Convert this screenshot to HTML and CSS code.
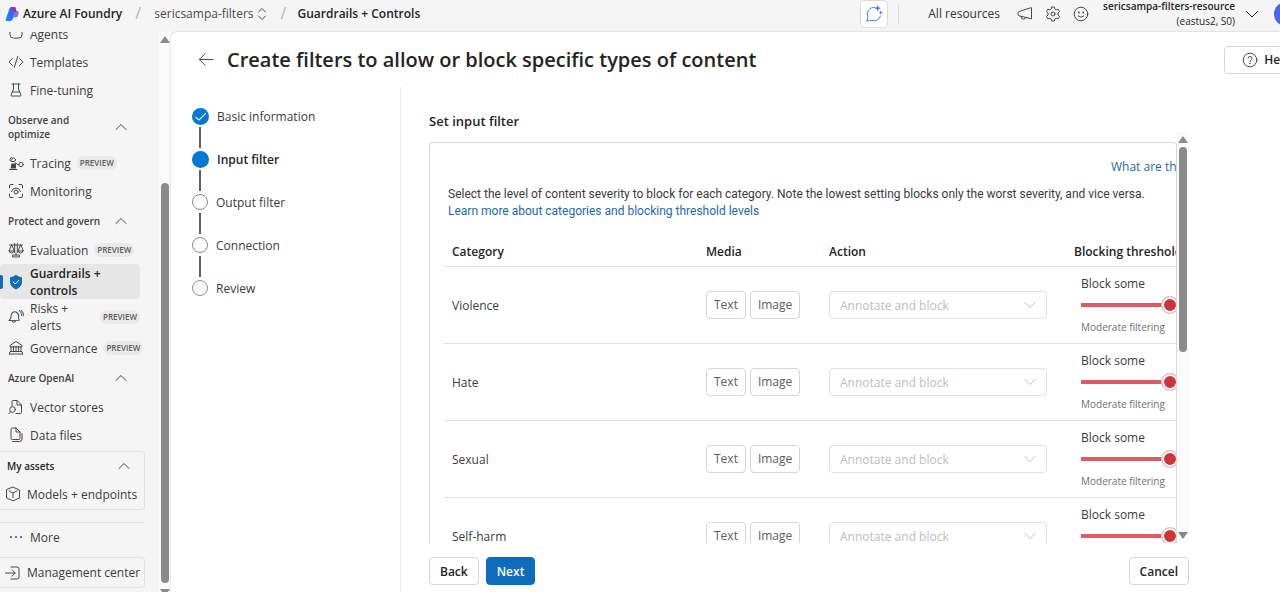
FILE: index.html
```html
<!DOCTYPE html>
<html lang="en">
<head>
<meta charset="utf-8">
<title>Azure AI Foundry - Guardrails + Controls</title>
<link rel="stylesheet" href="styles.css">
</head>
<body>
<header class="topbar">
  <a class="brand" href="#">
    <svg class="logo" viewBox="0 0 14 16" aria-hidden="true">
      <defs><linearGradient id="lg" x1="0" y1="1" x2="1" y2="0"><stop offset="0" stop-color="#1b8cf0"/><stop offset="1" stop-color="#3a55f5"/></linearGradient></defs>
      <path d="M6 1h4.500L9.500 5.500 8 12.500Q7.300 15 5 15H1.500Q.2 15 .7 13.600L4.500 2.500Q5 1 6 1z" fill="url(#lg)"/>
      <path d="M9.300 5H12q2 0 1.700 2L13 9.500Q12.500 11.500 10.500 11.500H8z" fill="#7d74f2"/>
      <path d="M6.500 1H9q1.500 0 1.900 1.500L11.600 6H9.500Q8.500 6 8.200 5L7.400 2Q7.200 1 6.500 1z" fill="#c0208f"/>
    </svg>
    Azure AI Foundry</a>
  <span class="slash">/</span>
  <button class="project" type="button">sericsampa-filters
    <svg class="i16" viewBox="0 0 16 16" aria-hidden="true"><path d="M4.500 6 8 2.500 11.500 6M4.500 10 8 13.500 11.500 10"/></svg>
  </button>
  <span class="slash near">/</span>
  <span class="crumb">Guardrails + Controls</span>
  <div class="tools">
    <button class="copilot" type="button" aria-label="Open assistant">
      <svg class="i18" viewBox="0 0 18 18" aria-hidden="true"><path d="M10 2.500A6.700 6.700 0 0 0 3 12.200L1.800 16.200l4.200-1A6.700 6.700 0 0 0 15.500 11"/><path class="spark" d="M12.700 0l.9 2.300 2.300.9-2.300.9-.9 2.300-.9-2.300-2.300-.9 2.300-.9zM15.800 5.500l.6 1.500 1.500.6-1.500.6-.6 1.500-.6-1.500-1.500-.6 1.500-.6z"/></svg>
    </button>
    <span class="bar"></span>
    <a class="all" href="#">All resources</a>
    <div class="icons">
      <button type="button" aria-label="Announcements"><svg class="i16" viewBox="0 0 16 16"><path d="M14.500 2.200v10.600L2 9.800q-1-.3-1-1.200V7q0-1 1-1.400L13.500 1.800q1-.3 1 .4zM4 10.300q0 2.900 2.500 2.900 2 0 2.500-1.800"/></svg></button>
      <button type="button" aria-label="Settings"><svg class="i16" viewBox="0 0 16 16"><path d="M6.700 1h2.600l.5 2 1.400.8 2-.6 1.300 2.300L13 7v2l1.500 1.500-1.300 2.300-2-.6-1.400.8-.5 2H6.700l-.5-2-1.400-.8-2 .6-1.300-2.300L3 9V7L1.500 5.500l1.300-2.300 2 .6L6.200 3z"/><circle cx="8" cy="8" r="2"/></svg></button>
      <button type="button" aria-label="Feedback"><svg class="i16" viewBox="0 0 16 16"><circle cx="8" cy="8" r="6.800"/><path d="M5.300 10q2.700 2.700 5.400 0"/><circle class="dot" cx="5.800" cy="6.500" r=".9"/><circle class="dot" cx="10.200" cy="6.500" r=".9"/></svg></button>
    </div>
    <button class="account" type="button">
      <span class="who"><b>sericsampa-filters-resource</b><span>(eastus2, S0)</span></span>
      <svg class="i14 dark" viewBox="0 0 14 14" aria-hidden="true"><path d="M1.500 4.500 7 10l5.500-5.500"/></svg>
    </button>
    <span class="avatar"></span>
  </div>
</header>

<div class="shell">
  <aside class="side">
    <nav class="nav">
      <a class="item" href="#"><svg class="i16" viewBox="0 0 16 16"><path d="M2 6v3q0 3 3 3M14 6v3q0 3-3 3H8q-1 1-2 0"/></svg>Agents</a>
      <a class="item" href="#"><svg class="i16" viewBox="0 0 16 16"><path d="M4.500 4.500 1 8l3.500 3.500M11.500 4.500 15 8l-3.500 3.500M9.700 2.500 6.300 13.500"/></svg>Templates</a>
      <a class="item" href="#"><svg class="i16" viewBox="0 0 16 16"><path d="M4 2h8M5.500 2v5L3 13q-.3 1 .7 1h8.600q1 0 .7-1L10.500 7V2M4.300 10h7.400"/></svg>Fine-tuning</a>
      <button class="group tall" type="button"><span>Observe and optimize</span><svg class="i14" viewBox="0 0 14 14"><path d="M2 9.500 7 4.500l5 5"/></svg></button>
      <a class="item" href="#"><svg class="i16" viewBox="0 0 16 16"><path d="M3 5.500 5.500 2.500 8 5 6 6.500H3.500q-1.500 0-1.500-2 0-2 2-2M7 7.500l2.500 2H11M1.500 14.500H9"/><path class="dot" d="M3.500 8.500h4.500v5H2.500z"/><circle cx="13" cy="9.500" r="2.200"/></svg>Tracing<span class="tag">PREVIEW</span></a>
      <a class="item" href="#"><svg class="i16" viewBox="0 0 16 16"><path d="M1.500 5V3q0-1.500 1.500-1.500h2M11 1.500h2q1.500 0 1.500 1.500v2M14.500 11v2q0 1.500-1.500 1.500h-2M5 14.500H3Q1.500 14.500 1.500 13v-2M3.500 8.500q1-3.500 4.500-3.500t4.500 3.500"/><circle cx="8" cy="9" r="2"/></svg>Monitoring</a>
      <button class="group" type="button"><span>Protect and govern</span><svg class="i14" viewBox="0 0 14 14"><path d="M2 9.500 7 4.500l5 5"/></svg></button>
      <a class="item" href="#"><svg class="i16" viewBox="0 0 16 16"><path d="M1.500 3h13M6.700 1.500v9M9.300 1.500v9M3.500 3 1 9h5zM12.500 3 10 9h5zM1 9q.5 2 2.500 2T6 9M10 9q.5 2 2.500 2T15 9M4.500 14.500v-1.500h7v1.500zM8 11v2"/></svg>Evaluation<span class="tag">PREVIEW</span></a>
      <a class="item two active" href="#" aria-current="page"><svg class="i16" viewBox="0 0 16 16"><path class="shield" d="M8 .8q2.500 2.200 6 2.400V8q0 5-6 7.400Q2 13 2 8V3.200Q5.500 3 8 .8z"/><path class="tick" d="M5.200 8 7.200 10 11 6.200"/></svg><span>Guardrails + controls</span></a>
      <a class="item two" href="#"><svg class="i16" viewBox="0 0 16 16"><path d="M1.500 12.500 3 10V7.500q0-4.500 4.200-4.500Q11 4 10.500 8.500l1.200 2.200L1.500 12.500zM5 12.500q1.200 2.500 3.200-.6M10.500 1.200q2.500 1.300 2.800 4.500M12.500.8q2.300 1.700 2.600 5" transform="rotate(8 8 8)"/></svg><span>Risks + alerts</span><span class="tag">PREVIEW</span></a>
      <a class="item" href="#"><svg class="i16" viewBox="0 0 16 16"><path d="M2 6.500V5.500L8 1.500l6 4v1zM3 6.500V11M5.500 6.500V11M8 6.500V11M10.500 6.500V11M13 6.500V11M2.500 11.500h11M1.500 14.200v-1q0-1.500 1-1.700M14.500 14.200v-1q0-1.500-1-1.700M1.500 14h13"/></svg>Governance<span class="tag">PREVIEW</span></a>
      <button class="group" type="button"><span>Azure OpenAI</span><svg class="i14" viewBox="0 0 14 14"><path d="M2 9.500 7 4.500l5 5"/></svg></button>
      <a class="item" href="#"><svg class="i16" viewBox="0 0 16 16"><path d="M4 7V2.700Q4 1.500 5.200 1.500H9l4.500 4.500v7.300q0 1.200-1.200 1.200H8M9 1.500V6h4.500"/><circle cx="4.500" cy="10.500" r="2.800"/><path d="m2.700 12.700-1.700 2"/></svg>Vector stores</a>
      <a class="item" href="#"><svg class="i16" viewBox="0 0 16 16"><path d="M3 2.200Q3 1 4.200 1H8l4 4v6.300q0 1.200-1.200 1.200H4.200Q3 12.500 3 11.300zM8 1v4h4M4.500 14.500h6.800Q14 14.500 14 12V6.500"/></svg>Data files</a>
      <section class="assets">
        <button class="group" type="button"><span>My assets</span><svg class="i14" viewBox="0 0 14 14"><path d="M2 9.500 7 4.500l5 5"/></svg></button>
        <a class="item" href="#"><svg class="i16" viewBox="0 0 16 16"><path d="M8 1.200 14.500 4v8L8 14.800 1.500 12V4zM4 5l4 2 4-2M8 7v4.500"/></svg>Models + endpoints</a>
      </section>
      <a class="item more" href="#"><svg class="i16" viewBox="0 0 16 16"><circle class="dot" cx="3" cy="7" r="1"/><circle class="dot" cx="8" cy="7" r="1"/><circle class="dot" cx="13" cy="7" r="1"/></svg>More</a>
      <a class="item manage" href="#"><svg class="i16" viewBox="0 0 16 16"><path d="M.5 8H10M7 4.800 10.200 8 7 11.200M6 2h6q2 0 2 2v8q0 2-2 2H6"/></svg>Management center</a>
    </nav>
    <div class="scroll page-scroll" aria-hidden="true"><i class="up"></i><i class="thumb"></i><i class="down"></i></div>
  </aside>

  <main class="main">
    <div class="heading">
      <button class="back" type="button" aria-label="Go back"><svg class="i18" viewBox="0 0 18 18"><path d="M16 8.500H2.500M8 2.800 2.300 8.500 8 14.200"/></svg></button>
      <h1>Create filters to allow or block specific types of content</h1>
      <button class="btn help" type="button"><svg class="i16" viewBox="0 0 16 16"><circle cx="8" cy="8" r="6.800"/><path d="M6 6.300Q6 4.500 8 4.500t2 1.800Q10 7.300 9 8 8 8.500 8 9.500"/><circle class="dot" cx="8" cy="11.500" r=".8"/></svg>Help</button>
    </div>
    <div class="wizard">
      <ol class="steps">
        <li class="done"><span class="mark"><svg viewBox="0 0 16 16"><path d="M3.500 8.500 6.500 11.300 12.800 5"/></svg></span>Basic information</li>
        <li class="now"><span class="mark"></span>Input filter</li>
        <li><span class="mark"></span>Output filter</li>
        <li><span class="mark"></span>Connection</li>
        <li><span class="mark"></span>Review</li>
      </ol>
      <section class="content">
        <h2>Set input filter</h2>
        <div class="viewport">
          <div class="card">
            <p class="what"><a href="#">What are these?</a></p>
            <p class="intro">Select the level of content severity to block for each category. Note the lowest setting blocks only the worst severity, and vice versa.<br><a href="#">Learn more about categories and blocking threshold levels</a></p>
            <table>
              <thead><tr><th class="c1">Category</th><th class="c2">Media</th><th class="c3">Action</th><th>Blocking threshold</th></tr></thead>
              <tbody>
                <tr><td>Violence</td><td><span class="chips"><span>Text</span><span>Image</span></span></td>
                  <td><span class="pick"><select aria-label="Violence action" disabled><option>Annotate and block</option></select><svg class="i14" viewBox="0 0 14 14"><path d="M2 4.500 7 9.500l5-5"/></svg></span></td>
                  <td class="level"><label for="s1">Block some</label><input id="s1" type="range" min="0" max="2" value="1"><small>Moderate filtering</small></td></tr>
                <tr><td>Hate</td><td><span class="chips"><span>Text</span><span>Image</span></span></td>
                  <td><span class="pick"><select aria-label="Hate action" disabled><option>Annotate and block</option></select><svg class="i14" viewBox="0 0 14 14"><path d="M2 4.500 7 9.500l5-5"/></svg></span></td>
                  <td class="level"><label for="s2">Block some</label><input id="s2" type="range" min="0" max="2" value="1"><small>Moderate filtering</small></td></tr>
                <tr><td>Sexual</td><td><span class="chips"><span>Text</span><span>Image</span></span></td>
                  <td><span class="pick"><select aria-label="Sexual action" disabled><option>Annotate and block</option></select><svg class="i14" viewBox="0 0 14 14"><path d="M2 4.500 7 9.500l5-5"/></svg></span></td>
                  <td class="level"><label for="s3">Block some</label><input id="s3" type="range" min="0" max="2" value="1"><small>Moderate filtering</small></td></tr>
                <tr><td>Self-harm</td><td><span class="chips"><span>Text</span><span>Image</span></span></td>
                  <td><span class="pick"><select aria-label="Self-harm action" disabled><option>Annotate and block</option></select><svg class="i14" viewBox="0 0 14 14"><path d="M2 4.500 7 9.500l5-5"/></svg></span></td>
                  <td class="level"><label for="s4">Block some</label><input id="s4" type="range" min="0" max="2" value="1"></td></tr>
              </tbody>
            </table>
          </div>
          <div class="scroll card-scroll" aria-hidden="true"><i class="up"></i><i class="thumb"></i><i class="down"></i></div>
        </div>
        <div class="actions">
          <button class="btn" type="button">Back</button>
          <button class="btn primary" type="button">Next</button>
          <button class="btn cancel" type="button">Cancel</button>
        </div>
      </section>
    </div>
  </main>
</div>
</body>
</html>
```
FILE: styles.css
```css
* { box-sizing: border-box; }
body {
  margin: 0;
  height: 100vh;
  display: flex;
  flex-direction: column;
  overflow: hidden;
  background: #f5f5f5;
  color: #3b3b3b;
  font: 12px/17px "Segoe UI", "Open Sans", "Noto Sans", sans-serif;
}
h1, h2, p, ol { margin: 0; padding: 0; }
a { color: #1f69a8; text-decoration: none; }
button { font: inherit; color: inherit; background: none; border: 0; padding: 0; }
svg { flex: none; fill: none; stroke: #484848; stroke-width: 1; stroke-linecap: round; stroke-linejoin: round; }
.dot { fill: #484848; stroke: none; }
.i14 { width: 14px; height: 14px; }
.i16 { width: 16px; height: 16px; }
.i18 { width: 18px; height: 18px; }

/* Top bar */
.topbar { flex: none; height: 32px; padding: 0 0 5px 5px; display: flex; align-items: center; white-space: nowrap; }
.brand { display: flex; align-items: center; gap: 4px; color: #242424; font-weight: 600; }
.logo { width: 14px; height: 16px; stroke: none; }
.slash { width: 32px; text-align: center; color: #b5b5b5; font-size: 16px; }
.near { width: 28px; }
.project { display: flex; align-items: center; color: #4a4a4a; }
.crumb { color: #242424; font-weight: 600; }
.tools { margin-left: auto; display: flex; align-items: center; }
.copilot { width: 28px; height: 28px; border: 1px solid #dcdcdc; border-radius: 4px; background: #fff; display: grid; place-items: center; }
.copilot svg { stroke: #3d86ee; }
.copilot .spark { fill: #4a6cf7; stroke: none; }
.bar { width: 1px; height: 18px; margin: 0 29px 0 10px; background: #dcdcdc; }
.all { color: #333; font-weight: 500; }
.icons { display: flex; gap: 12px; margin: 0 14px 0 17px; }
.icons button { display: flex; }
.account { display: flex; align-items: center; gap: 10px; color: #242424; }
.who { display: flex; flex-direction: column; align-items: flex-end; font-size: 10px; line-height: 15px; }
.who b { font-weight: 600; }
.dark { stroke: #222; }
.avatar { width: 24px; height: 24px; margin: 0 -18px 0 15px; border-radius: 50%; background: #4a66e8; }

.shell { flex: 1; min-height: 0; display: flex; }

/* Sidebar */
.side { flex: none; width: 171px; display: flex; justify-content: space-between; overflow: hidden; }
.nav { width: 145px; margin-top: -12px; }
.item { height: 28px; padding-left: 8px; display: flex; align-items: center; gap: 6px; color: #3b3b3b; white-space: nowrap; }
.two { height: 35px; width: 140px; white-space: normal; }
.two > span { width: 74px; }
.active { position: relative; background: #e6e6e6; border-radius: 4px; color: #242424; font-weight: 600; }
.active::before { content: ""; position: absolute; left: 0; top: 11px; width: 3px; height: 14px; border-radius: 0 2px 2px 0; background: #0f6cbd; }
.shield { fill: #0f6cbd; stroke: none; }
.tick { stroke: #fff; }
.tag { padding: 0 3px; border-radius: 7px; background: #e9e9e9; color: #5c5c5c; font-size: 8px; line-height: 14px; font-weight: 600; }
.two > .tag { width: auto; margin-left: -6px; }
.group { width: 120px; height: 31px; margin-left: 8px; display: flex; align-items: center; justify-content: space-between; text-align: left; color: #424242; font-size: 10px; line-height: 14px; font-weight: 600; }
.group.tall { height: 45px; }
.group.tall span { width: 72px; }
.assets { margin: 2px 0 12px; border: 1px solid #e2e2e2; border-left: 0; border-radius: 0 4px 4px 0; padding-bottom: 1px; }
.assets .group { height: 28px; margin-left: 7px; width: 124px; color: #242424; }
.assets .item, .manage { padding-left: 5px; }
.more { border-top: 1px solid #e2e2e2; height: 30px; }
.manage { height: 31px; margin-top: 5px; border: 1px solid #e2e2e2; border-left: 0; border-radius: 0 4px 4px 0; }

/* Scroll indicators */
.scroll { flex: none; width: 12px; display: flex; flex-direction: column; align-items: center; background: #fafafa; }
.scroll i { flex: none; width: 8px; background: #8a8a8a; }
.scroll .up { width: 10px; height: 7px; clip-path: polygon(50% 0, 100% 100%, 0 100%); }
.scroll .down { width: 10px; height: 7px; clip-path: polygon(0 0, 100% 0, 50% 100%); }
.scroll .thumb { border-radius: 4px; }
.page-scroll { padding-top: 4px; }
.page-scroll .thumb { height: 400px; margin: 140px 0 6px; }
.card-scroll { padding: 4px 0; }
.card-scroll .thumb { height: 205px; margin: 4px 0 auto; }

/* Main */
.main { flex: 1; min-width: 0; display: flex; flex-direction: column; overflow: hidden; background: #fff; border-top-left-radius: 6px; box-shadow: 0 0 2px #bbb; }
.heading { flex: none; height: 55px; padding-left: 26px; display: flex; align-items: center; gap: 12px; white-space: nowrap; }
.back { display: flex; }
h1 { color: #242424; font-size: 20px; line-height: 28px; font-weight: 600; }
.btn { height: 28px; padding: 0 10px; border: 1px solid #d6d6d6; border-radius: 4px; background: #fff; color: #242424; font-weight: 600; }
.help { margin: 0 -32px 0 auto; padding: 0 20px 0 17px; display: flex; align-items: center; gap: 6px; }
.wizard { flex: 1; min-height: 0; display: flex; }
.steps { flex: none; width: 230px; padding: 21px 0 0 21px; border-right: 1px solid #e6e6e6; list-style: none; }
.steps li { position: relative; height: 43px; display: flex; align-items: flex-start; gap: 8px; }
.steps li:not(:last-child)::after { content: ""; position: absolute; left: 7px; top: 19px; width: 2px; height: 21px; background: #616161; }
.mark { flex: none; width: 16px; height: 16px; border: 1px solid #8a8a8a; border-radius: 50%; }
.mark svg { display: block; width: 17px; height: 17px; stroke: #fff; }
.done .mark, .now .mark { width: 17px; height: 17px; border: 0; background: #0078d4; }
.now { color: #242424; font-weight: 600; }
.content { flex: 1; min-width: 0; padding: 24px 91px 0 28px; display: flex; flex-direction: column; }
h2 { color: #242424; font-size: 13px; line-height: 20px; font-weight: 600; }
.viewport { flex: 1; min-height: 0; margin-top: 1px; display: flex; overflow: hidden; }
.card { flex: 1; min-width: 0; margin-top: 10px; padding: 15px 0 0 14px; border: 1px solid #dadada; border-bottom: 0; border-radius: 4px 4px 0 0; overflow: hidden; }
.what { margin-left: 667px; white-space: nowrap; }
.intro { padding: 11px 0 0 4px; font-family: Roboto, "Open Sans", sans-serif; white-space: nowrap; }
table { width: 840px; margin-top: 17px; border-collapse: collapse; table-layout: fixed; }
th { height: 29px; padding: 0 8px; text-align: left; font-weight: 600; color: #242424; border-bottom: 1px solid #e3e3e3; }
.c1 { width: 254px; }
.c2 { width: 123px; }
.c3 { width: 245px; }
td { height: 77px; padding: 1px 8px 0; border-bottom: 1px solid #e3e3e3; }
.chips { display: flex; gap: 4px; }
.chips span { height: 28px; padding: 0 7px; border: 1px solid #d6d6d6; border-radius: 4px; line-height: 26px; color: #5c5c5c; }
.pick { position: relative; display: block; width: 218px; }
select { appearance: none; display: block; width: 100%; height: 28px; padding: 0 10px; border: 1px solid #e0e0e0; border-radius: 4px; background: #fff; color: #bdbdbd; font: inherit; opacity: 1; }
.pick svg { position: absolute; right: 10px; top: 7px; stroke: #bdbdbd; }
.level { padding: 8px 8px 0 15px; vertical-align: top; }
.level label, .level small { display: block; }
.level small { color: #707070; font-size: 10px; line-height: 15px; }
input[type="range"] { appearance: none; display: block; width: 178px; height: 18px; margin: 4px 0 6px; background: linear-gradient(to right, #dd5b65 50%, #d1d1d1 50%) center / 100% 4px no-repeat; border-radius: 2px; }
input[type="range"]::-webkit-slider-thumb { appearance: none; width: 18px; height: 18px; border: 1px solid #d1d1d1; border-radius: 50%; background: #d13438; box-shadow: inset 0 0 0 2px #fff; }
.actions { flex: none; padding: 14px 0 7px; display: flex; gap: 7px; }
.primary { border-color: #0f6cbd; background: #0f6cbd; color: #fff; }
.cancel { margin-left: auto; }
```
